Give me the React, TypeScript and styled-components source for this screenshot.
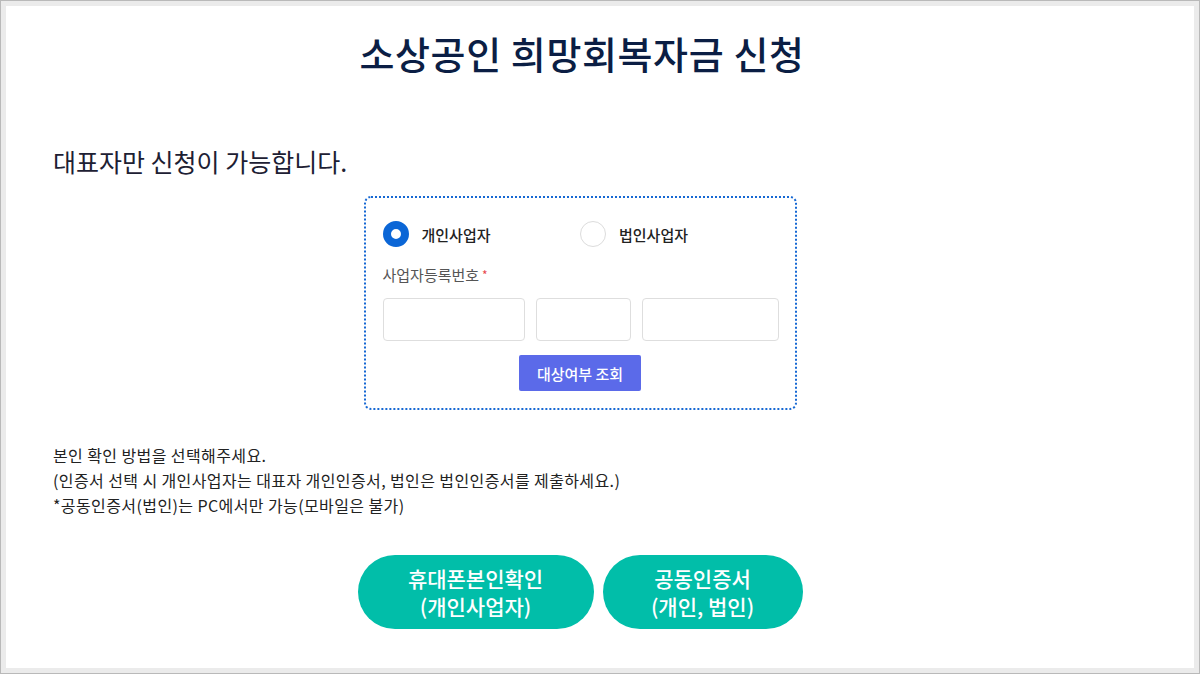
import React from "react";
import styled, { createGlobalStyle } from "styled-components";

const Global = createGlobalStyle`
  html, body { margin: 0; padding: 0; background: #ebebeb; }
  body { font-family: "Noto Sans CJK KR", "Noto Sans", sans-serif; }
  * { box-sizing: border-box; }
`;

const Frame = styled.div`
  width: 1200px;
  height: 674px;
  border: 1px solid #b9b9b9;
  background: #ebebeb;
  padding: 5px;
`;

const Page = styled.div`
  background: #fff;
  height: 100%;
  display: flex;
  flex-direction: column;
  padding: 20px 87px 0 47px;
  color: #222;
`;

const Title = styled.h1`
  margin: 0 0 0 4px;
  font-size: 38px;
  line-height: 54px;
  font-weight: 500;
  color: #0b1e44;
  text-align: center;
  letter-spacing: 0.6px;
`;

const Lead = styled.p`
  margin: 64px 0 0;
  font-size: 25px;
  line-height: 34px;
  font-weight: 400;
  color: #1d2033;
`;

const Center = styled.div`
  display: flex;
  justify-content: center;
`;

const Box = styled.div`
  width: 433px;
  margin-top: 18px;
  border: 2px dotted #1668d3;
  border-radius: 7px;
  padding: 23px 17px 17px 17px;
  display: flex;
  flex-direction: column;
`;

const RadioRow = styled.div`
  display: flex;
  align-items: center;
`;

const RadioItem = styled.label`
  display: flex;
  align-items: center;
  gap: 13px;
  width: 204px;
  font-size: 15px;
  font-weight: 500;
  color: #222;
`;

const RadioDot = styled.span<{ $on?: boolean }>`
  width: 26px;
  height: 26px;
  border-radius: 50%;
  flex: none;
  background: #fff;
  border: ${(p) => (p.$on ? "8px solid #0b66d6" : "1px solid #dcdcdc")};
`;

const FieldLabel = styled.div`
  margin-top: 18px;
  font-size: 15px;
  line-height: 20px;
  color: #555;
`;

const Star = styled.span`
  color: #e8474c;
  font-size: 12px;
  margin-left: 3px;
  vertical-align: top;
`;

const Inputs = styled.div`
  display: flex;
  gap: 11px;
  margin-top: 13px;
`;

const Input = styled.input<{ $w: number }>`
  width: ${(p) => p.$w}px;
  height: 43px;
  border: 1px solid #dedede;
  border-radius: 4px;
  background: #fff;
  padding: 0 10px;
  outline: none;
`;

const SearchButton = styled.button`
  align-self: center;
  margin-top: 14px;
  width: 122px;
  height: 36px;
  border: none;
  border-radius: 2px;
  background: #5b6ae9;
  color: #fff;
  font-family: inherit;
  font-size: 15px;
  font-weight: 500;
`;

const Notice = styled.div`
  margin-top: 33px;
  font-size: 16px;
  line-height: 25px;
  letter-spacing: 0.4px;
  color: #222;
`;

const Actions = styled.div`
  display: flex;
  justify-content: center;
  gap: 9px;
  margin-top: 37px;
`;

const Pill = styled.button<{ $w: number }>`
  width: ${(p) => p.$w}px;
  height: 74px;
  border: none;
  border-radius: 37px;
  background: #01bea9;
  color: #fff;
  font-family: inherit;
  font-size: 21px;
  font-weight: 500;
  line-height: 28px;
`;

export default function App() {
  return (
    <>
      <Global />
      <Frame>
        <Page>
          <Title>소상공인 희망회복자금 신청</Title>
          <Lead>대표자만 신청이 가능합니다.</Lead>
          <Center>
            <Box>
              <RadioRow>
                <RadioItem>
                  <RadioDot $on />
                  개인사업자
                </RadioItem>
                <RadioItem>
                  <RadioDot />
                  법인사업자
                </RadioItem>
              </RadioRow>
              <FieldLabel>
                사업자등록번호<Star>*</Star>
              </FieldLabel>
              <Inputs>
                <Input $w={142} />
                <Input $w={95} />
                <Input $w={137} />
              </Inputs>
              <SearchButton>대상여부 조회</SearchButton>
            </Box>
          </Center>
          <Notice>
            본인 확인 방법을 선택해주세요.
            <br />
            (인증서 선택 시 개인사업자는 대표자 개인인증서, 법인은 법인인증서를 제출하세요.)
            <br />
            *공동인증서(법인)는 PC에서만 가능(모바일은 불가)
          </Notice>
          <Actions>
            <Pill $w={236}>
              휴대폰본인확인
              <br />
              (개인사업자)
            </Pill>
            <Pill $w={200}>
              공동인증서
              <br />
              (개인, 법인)
            </Pill>
          </Actions>
        </Page>
      </Frame>
    </>
  );
}
